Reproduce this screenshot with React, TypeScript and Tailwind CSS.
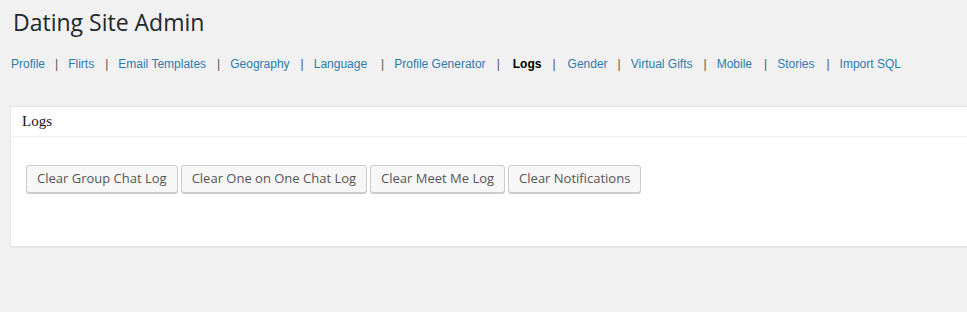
import React from "react";

const links: { t: string; ml: string; mr: string }[] = [
  { t: "Profile", ml: "ml-[10px]", mr: "mr-[10px]" },
  { t: "Flirts", ml: "ml-[11px]", mr: "mr-[10px]" },
  { t: "Email Templates", ml: "ml-[11px]", mr: "mr-[10px]" },
  { t: "Geography", ml: "ml-[11px]", mr: "mr-[10px]" },
  { t: "Language", ml: "ml-[14px]", mr: "mr-[10px]" },
  { t: "Profile Generator", ml: "ml-[11px]", mr: "mr-[13px]" },
  { t: "Logs", ml: "ml-[11px]", mr: "mr-[12px]" },
  { t: "Gender", ml: "ml-[10px]", mr: "mr-[10px]" },
  { t: "Virtual Gifts", ml: "ml-[11px]", mr: "mr-[10px]" },
  { t: "Mobile", ml: "ml-[12px]", mr: "mr-[10px]" },
  { t: "Stories", ml: "ml-[12px]", mr: "mr-[10px]" },
  { t: "Import SQL", ml: "", mr: "" },
];

const buttons = [
  "Clear Group Chat Log",
  "Clear One on One Chat Log",
  "Clear Meet Me Log",
  "Clear Notifications",
];

export default function App() {
  return (
    <div className="w-[967px] h-[312px] overflow-hidden bg-[#f1f1f1]">
      <h2 className="pl-[13px] pt-[8px] text-[23px] leading-[29px] font-normal text-[#23282d] font-['Open_Sans',sans-serif]">
        Dating Site Admin
      </h2>
      <nav className="mt-[18px] pl-[11px] flex items-center text-[12px] leading-[18px] font-['Liberation_Sans',Arial,sans-serif]">
        {links.map((l, i) => (
          <React.Fragment key={l.t}>
            {l.t === "Logs" ? (
              <span className="font-bold text-black">{l.t}</span>
            ) : (
              <a className="text-[#2e7bae]">{l.t}</a>
            )}
            {i < links.length - 1 && (
              <span className={`${l.ml} ${l.mr} text-[#555]`}>|</span>
            )}
          </React.Fragment>
        ))}
      </nav>
      <div className="mt-[33px] ml-[10px] w-[1000px] h-[141px] bg-white border border-[#e5e5e5] shadow-[0_1px_1px_rgba(0,0,0,0.04)]">
        <div className="h-[30px] border-b border-[#eee] pl-[11px] flex items-center text-[15px] text-[#111] font-['Liberation_Serif',serif]">
          Logs
        </div>
        <div className="pt-[28px] pl-[15px] flex gap-[3px]">
          {buttons.map((b) => (
            <button
              key={b}
              className="h-[28px] px-[10px] bg-[#f7f7f7] border border-[#ccc] rounded-[3px] shadow-[0_1px_0_#ccc] text-[13px] text-[#555] font-['Open_Sans',sans-serif]"
            >
              {b}
            </button>
          ))}
        </div>
      </div>
    </div>
  );
}
